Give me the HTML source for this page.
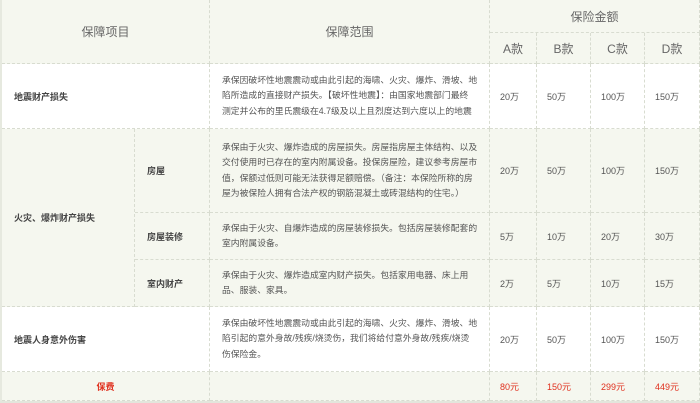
<!DOCTYPE html>
<html><head><meta charset="utf-8"><style>
*{margin:0;padding:0;box-sizing:border-box}
body{width:700px;height:403px;background:#f5f7ef;font-family:"Liberation Sans","Noto Sans CJK SC",sans-serif;color:#555;position:relative;overflow:hidden}
.c{position:absolute;border-right:1px dashed #d8dcd0;border-bottom:1px dashed #d8dcd0;display:flex;align-items:center;font-size:9px}
.w{background:#fff}
.ctr{justify-content:center}
.v{padding-left:10px}
.h{font-size:12px;color:#666}
.t{padding-left:12px;line-height:15.5px;font-size:8.8px;white-space:nowrap}
.b{font-weight:bold;color:#444}
.r{color:#e0301e}
.l{padding-left:12px}
</style></head><body>
<div style="position:absolute;left:0;top:0;width:2px;height:403px;background:#e6e9df"></div>
<div class="c ctr h" style="left:2px;top:0;width:208px;height:64px">保障项目</div>
<div class="c ctr h" style="left:210px;top:0;width:280px;height:64px">保障范围</div>
<div class="c ctr h" style="left:490px;top:0;width:210px;height:33px">保险金额</div>
<div class="c ctr h" style="left:490px;top:33px;width:47px;height:31px">A款</div>
<div class="c ctr h" style="left:537px;top:33px;width:54px;height:31px">B款</div>
<div class="c ctr h" style="left:591px;top:33px;width:54px;height:31px">C款</div>
<div class="c ctr h" style="left:645px;top:33px;width:55px;height:31px">D款</div>
<div class="c w l b" style="left:2px;top:64px;width:208px;height:65px">地震财产损失</div>
<div class="c w t" style="left:210px;top:64px;width:280px;height:65px">承保因破坏性地震震动或由此引起的海啸、火灾、爆炸、滑坡、地<br>陷所造成的直接财产损失。【破坏性地震】：由国家地震部门最终<br>测定并公布的里氏震级在4.7级及以上且烈度达到六度以上的地震</div>
<div class="c w v" style="left:490px;top:64px;width:47px;height:65px">20万</div>
<div class="c w v" style="left:537px;top:64px;width:54px;height:65px">50万</div>
<div class="c w v" style="left:591px;top:64px;width:54px;height:65px">100万</div>
<div class="c w v" style="left:645px;top:64px;width:55px;height:65px">150万</div>
<div class="c l b" style="left:2px;top:129px;width:133px;height:178px">火灾、爆炸财产损失</div>
<div class="c l b" style="left:135px;top:129px;width:75px;height:84px">房屋</div>
<div class="c t" style="left:210px;top:129px;width:280px;height:84px">承保由于火灾、爆炸造成的房屋损失。房屋指房屋主体结构、以及<br>交付使用时已存在的室内附属设备。投保房屋险，建议参考房屋市<br>值，保额过低则可能无法获得足额赔偿。（备注：本保险所称的房<br>屋为被保险人拥有合法产权的钢筋混凝土或砖混结构的住宅。）</div>
<div class="c v" style="left:490px;top:129px;width:47px;height:84px">20万</div>
<div class="c v" style="left:537px;top:129px;width:54px;height:84px">50万</div>
<div class="c v" style="left:591px;top:129px;width:54px;height:84px">100万</div>
<div class="c v" style="left:645px;top:129px;width:55px;height:84px">150万</div>
<div class="c l b" style="left:135px;top:213px;width:75px;height:47px">房屋装修</div>
<div class="c t" style="left:210px;top:213px;width:280px;height:47px">承保由于火灾、自爆炸造成的房屋装修损失。包括房屋装修配套的<br>室内附属设备。</div>
<div class="c v" style="left:490px;top:213px;width:47px;height:47px">5万</div>
<div class="c v" style="left:537px;top:213px;width:54px;height:47px">10万</div>
<div class="c v" style="left:591px;top:213px;width:54px;height:47px">20万</div>
<div class="c v" style="left:645px;top:213px;width:55px;height:47px">30万</div>
<div class="c l b" style="left:135px;top:260px;width:75px;height:47px">室内财产</div>
<div class="c t" style="left:210px;top:260px;width:280px;height:47px">承保由于火灾、爆炸造成室内财产损失。包括家用电器、床上用<br>品、服装、家具。</div>
<div class="c v" style="left:490px;top:260px;width:47px;height:47px">2万</div>
<div class="c v" style="left:537px;top:260px;width:54px;height:47px">5万</div>
<div class="c v" style="left:591px;top:260px;width:54px;height:47px">10万</div>
<div class="c v" style="left:645px;top:260px;width:55px;height:47px">15万</div>
<div class="c w l b" style="left:2px;top:307px;width:208px;height:65px">地震人身意外伤害</div>
<div class="c w t" style="left:210px;top:307px;width:280px;height:65px">承保由破坏性地震震动或由此引起的海啸、火灾、爆炸、滑坡、地<br>陷引起的意外身故/残疾/烧烫伤，我们将给付意外身故/残疾/烧烫<br>伤保险金。</div>
<div class="c w v" style="left:490px;top:307px;width:47px;height:65px">20万</div>
<div class="c w v" style="left:537px;top:307px;width:54px;height:65px">50万</div>
<div class="c w v" style="left:591px;top:307px;width:54px;height:65px">100万</div>
<div class="c w v" style="left:645px;top:307px;width:55px;height:65px">150万</div>
<div class="c ctr r b" style="left:2px;top:372px;width:208px;height:29px">保费</div>
<div class="c" style="left:210px;top:372px;width:280px;height:29px"></div>
<div class="c v r" style="left:490px;top:372px;width:47px;height:29px">80元</div>
<div class="c v r" style="left:537px;top:372px;width:54px;height:29px">150元</div>
<div class="c v r" style="left:591px;top:372px;width:54px;height:29px">299元</div>
<div class="c v r" style="left:645px;top:372px;width:55px;height:29px">449元</div>
<div style="position:absolute;left:0;top:401px;width:700px;height:2px;background:#e3e6dc"></div>
</body></html>
